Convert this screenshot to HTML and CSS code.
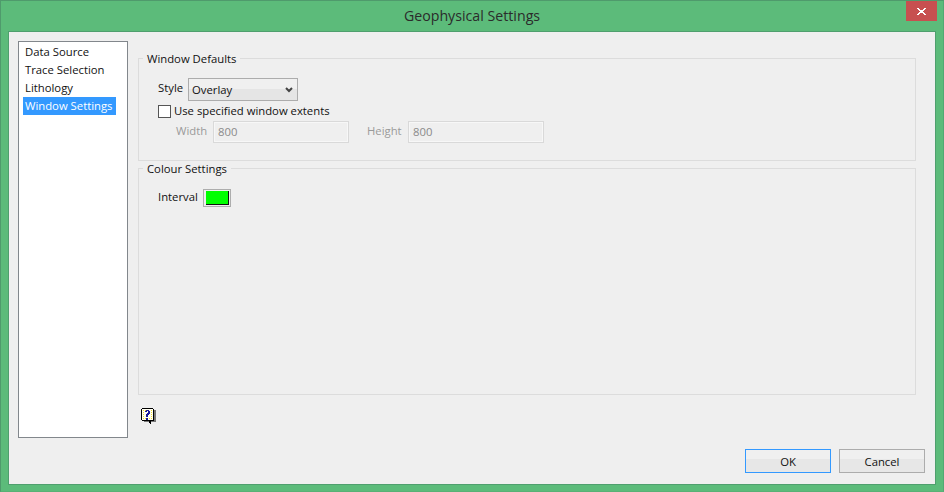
FILE: index.html
```html
<!DOCTYPE html>
<html lang="en">
<head>
<meta charset="utf-8">
<title>Geophysical Settings</title>
<link rel="stylesheet" href="styles.css">
</head>
<body>
<div class="window">
  <div class="titlebar">
    <div class="title">Geophysical Settings</div>
    <div class="close"><svg width="9" height="7" viewBox="0 0 9 7" shape-rendering="crispEdges"><path d="M0 0h2v1h1v1h3V1h1V0h2v1H8v1H7v1H6v1h1v1h1v1h1v1H7V6H6V5H3v1H2v1H0V6h1V5h1V4h1V3H2V2H1V1H0z" fill="#fff"/></svg></div>
  </div>
  <div class="client">
    <div class="main">
      <ul class="nav">
        <li>Data Source</li>
        <li>Trace Selection</li>
        <li>Lithology</li>
        <li class="selected">Window Settings</li>
      </ul>
      <div class="panel">
        <section class="group defaults">
          <h2 class="legend">Window Defaults</h2>
          <div class="row style-row">
            <span class="style-label">Style</span>
            <div class="select"><span>Overlay</span><svg width="8" height="6" viewBox="0 0 8 6"><path d="M1 1l3 3 3-3" fill="none" stroke="#444" stroke-width="2"/></svg></div>
          </div>
          <label class="row check-row"><span class="check"></span><span class="check-text">Use specified window extents</span></label>
          <div class="row extents">
            <span class="dim w-label">Width</span><div class="input">800</div>
            <span class="dim h-label">Height</span><div class="input">800</div>
          </div>
        </section>
        <section class="group colours">
          <h2 class="legend">Colour Settings</h2>
          <div class="row interval">
            <span class="interval-label">Interval</span>
            <div class="swatch"><div class="swatch-fill"></div></div>
          </div>
        </section>
        <div class="help">
          <svg width="15" height="18" viewBox="0 0 15 18" shape-rendering="crispEdges">
            <path d="M13 3h2v12h-5v-2h3zM3 14h6v1H3z" fill="#777"/>
            <path d="M1 1h11v1h1v12h-3v3H9v-1H8v-2H1v-1H0V2h1z" fill="#000"/>
            <path d="M1 2h11v11H1z" fill="#fffff2"/>
            <path d="M2 3h1v1H2zM4 3h1v1H4zM10 3h1v1h-1zM2 5h1v1H2zM10 5h1v1h-1zM2 7h1v1H2zM10 7h1v1h-1zM2 9h1v1H2zM10 9h1v1h-1zM2 11h1v1H2zM4 11h1v1H4zM8 11h1v1H8zM10 11h1v1h-1z" fill="#f2dc2e"/>
            <path d="M5 3h3v1h1v3H8v1H7v2H5V7h1V6h1V4H6v1H4V4h1zM5 11h2v2H5z" fill="#1c1c9c"/>
          </svg>
        </div>
      </div>
    </div>
    <div class="buttons">
      <button class="btn default" type="button">OK</button>
      <button class="btn" type="button">Cancel</button>
    </div>
  </div>
</div>
</body>
</html>
```
FILE: styles.css
```css
* { box-sizing: border-box; }
html, body { margin: 0; padding: 0; }
body {
  width: 944px;
  height: 492px;
  overflow: hidden;
  font-family: "Open Sans", "Noto Sans", sans-serif;
  font-size: 11.3px;
  color: #111;
}
.window {
  width: 944px;
  height: 492px;
  background: #5cbb7a;
  border: 1px solid #4f9a6c;
  border-right-color: #52a873;
  border-bottom-color: #58b176;
  display: flex;
  flex-direction: column;
  padding: 0 7px 6px 7px;
}
.titlebar {
  height: 30px;
  display: flex;
  justify-content: center;
  position: relative;
  flex: none;
}
.title {
  font-size: 14.2px;
  line-height: 30px;
  color: #2b2b2b;
}
.close {
  position: absolute;
  right: -1px;
  top: 0;
  width: 31px;
  height: 20px;
  background: #c75050;
  display: flex;
  align-items: center;
  justify-content: center;
}
.client {
  flex: 1;
  background: #efefef;
  border: 1px solid #4f9f6e;
  display: flex;
  flex-direction: column;
  padding: 9px 10px 11px 9px;
}
.main {
  display: flex;
  flex: 1;
  gap: 10px;
}
.nav {
  list-style: none;
  margin: 0;
  width: 110px;
  height: 397px;
  background: #fff;
  border: 1px solid #82878c;
  padding: 1px 4px;
  flex: none;
}
.nav li {
  height: 18px;
  line-height: 18px;
  padding: 0 2px;
  white-space: nowrap;
  margin-right: 7px;
}
.nav .selected {
  background: #3399ff;
  color: #fff;
}
.panel {
  width: 778px;
  padding-top: 17px;
  display: flex;
  flex-direction: column;
}
.group {
  position: relative;
  border: 1px solid #dcdcdc;
  padding-left: 19px;
}
.legend {
  position: absolute;
  top: -8px;
  left: 4px;
  margin: 0;
  padding: 0 4px;
  background: #efefef;
  font-size: 11.3px;
  font-weight: 400;
  line-height: 15px;
}
.defaults {
  height: 103px;
  margin-bottom: 7px;
  padding-top: 19px;
}
.colours {
  height: 227px;
  padding-top: 20px;
}
.row {
  display: flex;
  align-items: center;
}
.style-row { height: 23px; gap: 5px; }
.style-label { position: relative; top: -2px; }
.select {
  width: 110px;
  height: 23px;
  border: 1px solid #acacac;
  background: linear-gradient(#f0f0f0 0 50%, #e5e5e5 50% 100%);
  display: flex;
  align-items: center;
  justify-content: space-between;
  padding: 0 4px 0 3px;
}
.check-row { height: 17px; margin-top: 2px; gap: 3px; }
.check-text { position: relative; top: -1px; }
.check {
  width: 13px;
  height: 13px;
  border: 1px solid #555;
  background: #fff;
  flex: none;
}
.extents { height: 22px; margin-top: 1px; }
.dim { color: #9a9a9a; position: relative; top: -2px; }
.w-label { margin-left: 18px; width: 37px; }
.h-label { margin-left: 18px; width: 41px; }
.input {
  width: 136px;
  height: 22px;
  border: 1px solid #d9d9d9;
  outline: 1px solid #f7f7f7;
  outline-offset: -2px;
  color: #8a8a8a;
  line-height: 19px;
  padding-left: 4px;
}
.interval { height: 18px; gap: 6px; }
.interval-label { width: 39px; position: relative; top: -2px; }
.swatch {
  width: 28px;
  height: 18px;
  border: 1px solid #adadad;
  background: #efefef;
  padding: 1px 2px;
}
.swatch-fill {
  width: 23px;
  height: 14px;
  background: #00ff00;
  border-right: 1px solid #111;
  border-bottom: 1px solid #111;
}
.help {
  height: 18px;
  margin-top: 12px;
  margin-left: 3px;
}
.buttons {
  display: flex;
  justify-content: flex-end;
  gap: 8px;
}
.btn {
  width: 86px;
  height: 24px;
  padding: 0;
  border: 1px solid #acacac;
  background: linear-gradient(#f0f0f0 0 40%, #e7e7e7 40% 100%);
  font: inherit;
  color: #111;
}
.default { border-color: #3399ff; }
```
